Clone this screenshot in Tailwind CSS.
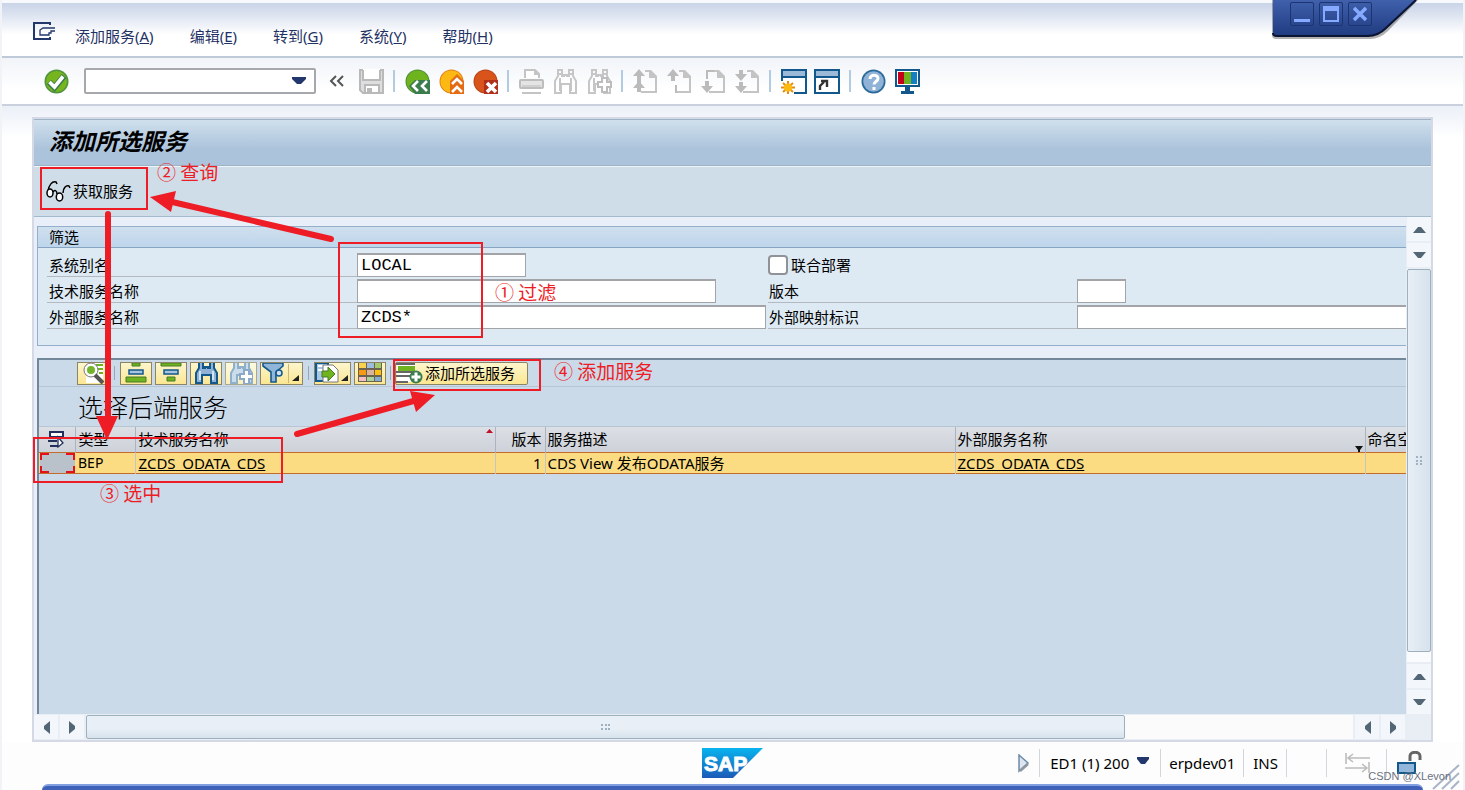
<!DOCTYPE html>
<html lang="zh-CN">
<head>
<meta charset="utf-8">
<title>添加所选服务</title>
<script src="https://cdn.jsdelivr.net/npm/@tailwindcss/browser@4"></script>
</head>
<body class="relative flex h-screen flex-col overflow-hidden border-x-2 border-[#f1f3f6] bg-white font-['Noto_Sans','Noto_Sans_CJK_SC',sans-serif] text-[15px] leading-5 text-black">

<svg class="hidden">
  <symbol id="binoc" viewBox="0 0 25 25"><path d="M5 1h4v6h2V6h3v1h2V1h4v6l3 5v12h-6v-9h-9v9H2V12l3-5z" fill="#fff" fill-opacity=".55" stroke="currentColor" stroke-width="2"/><path d="M5 5h4M16 5h4M7 9v13M18 9v13" stroke="currentColor" stroke-width="2" fill="none"/></symbol>
  <symbol id="page" viewBox="0 0 25 25"><path d="M12 1h6l6 6v17H8v-2h14V9h-6V3h-4z" fill="#c4c4c4"/></symbol>
</svg>

<header class="shrink-0">
  <nav class="flex h-[58px] items-center border-t-[3px] border-b-2 border-t-[#f7f9fc] border-b-[#bfcad8] bg-linear-to-b from-[#c9d4e8] to-white to-60% pt-3 pl-[31px] text-[#1f3264]">
    <button aria-label="菜单" class="mr-[19px] -mt-2"><svg width="23" height="19" viewBox="0 0 23 19" fill="none" stroke="#22376b" stroke-width="2"><path d="M17 3V1H1v16h16v-2"/><path d="M22 6H10L7 8v5h9v-2h2V9h4" stroke-width="1.3"/></svg></button>
    <div class="flex gap-9">
      <button>添加服务(<u>A</u>)</button>
      <button>编辑(<u>E</u>)</button>
      <button>转到(<u>G</u>)</button>
      <button>系统(<u>Y</u>)</button>
      <button>帮助(<u>H</u>)</button>
    </div>
  </nav>

  <div class="flex h-12 items-center gap-[9px] border-b-2 border-[#cbd0de] bg-linear-to-b from-[#f1f4f9] to-white to-70% pl-[42px]">
    <button aria-label="确认"><svg width="25" height="25" viewBox="0 0 25 25"><circle cx="12.500" cy="12.500" r="12" fill="#4f9440"/><circle cx="12.500" cy="12.500" r="10.500" fill="#77b51f"/><path d="M5 13l5.500 5.500L20 7" fill="none" stroke="#3b7c4c" stroke-width="6"/><path d="M5.500 13l5 5L19 7.500" fill="none" stroke="#fff" stroke-width="3.600"/></svg></button>
    <div class="ml-1.5 flex h-[26px] w-[232px] items-center rounded-xs border-2 border-[#a5a9ae] bg-white">
      <input aria-label="命令" class="min-w-0 flex-1 px-1 outline-none">
      <button aria-label="历史" class="px-2"><svg width="14" height="8" viewBox="0 0 14 8"><path d="M0 0h14v2L9 7H5L0 2z" fill="#22376b"/></svg></button>
    </div>
    <button aria-label="收起" class="mx-1"><svg width="15" height="12" viewBox="0 0 15 12" fill="none" stroke="#555" stroke-width="2"><path d="M7 1L2 6l5 5M14 1L9 6l5 5"/></svg></button>
    <button aria-label="保存" class="ml-0.5"><svg width="25" height="25" viewBox="0 0 25 25"><path d="M1 1h23v23H4l-3-3z" fill="#dedede" stroke="#b9b9b9" stroke-width="2"/><path d="M4 0h17v11H4z" fill="#fff"/><path d="M4 1v10h17V1" fill="none" stroke="#b9b9b9" stroke-width="2"/><path d="M6 16h14v8H6z" fill="#fff" stroke="#b9b9b9" stroke-width="2"/><path d="M8 19h5v5H8z" fill="#b9b9b9"/></svg></button>
    <span class="h-[22px] w-[3px] border-l-2 border-[#b3cbe0]"></span>
    <button aria-label="返回"><svg width="25" height="25" viewBox="0 0 25 25"><circle cx="12.500" cy="12.500" r="12" fill="#4c8f3a"/><circle cx="12.500" cy="12.500" r="11" fill="#6fb31e"/><path d="M4 17l6-6h15v14H10z" fill="#3b7c4c"/><path d="M13 12l-5 5 5 5M22 12l-5 5 5 5" fill="none" stroke="#fff" stroke-width="2.600"/></svg></button>
    <button aria-label="退出"><svg width="25" height="25" viewBox="0 0 25 25"><circle cx="12.500" cy="12.500" r="12" fill="#e2811a"/><circle cx="12.500" cy="12.500" r="11" fill="#fdb913"/><path d="M11 12l7-7 7 7v13H11z" fill="#e46d14"/><path d="M13 15l5-5 5 5M13 23l5-5 5 5" fill="none" stroke="#fff" stroke-width="2.600"/></svg></button>
    <button aria-label="取消"><svg width="25" height="25" viewBox="0 0 25 25"><circle cx="12.500" cy="12.500" r="12" fill="#b8421a"/><circle cx="12.500" cy="12.500" r="11" fill="#d9541a"/><path d="M11 11h14v14H11z" fill="#b0301c"/><path d="M14 14l9 9M23 14l-9 9" stroke="#fff" stroke-width="3.600"/></svg></button>
    <span class="h-[22px] w-[3px] border-l-2 border-[#b3cbe0]"></span>
    <button aria-label="打印"><svg width="25" height="25" viewBox="0 0 25 25"><path d="M6 9V1h10l4 4v4" fill="#fff" stroke="#c4c4c4" stroke-width="2"/><path d="M15 0v6h6z" fill="#c4c4c4"/><rect x="1" y="11" width="23" height="8" rx="1" fill="#e4e4e4" stroke="#bdbdbd" stroke-width="2"/><path d="M3 23h19v2H3z" fill="#c4c4c4"/><path d="M3 17h19" stroke="#bbb"/></svg></button>
    <button aria-label="查找" class="text-[#c6c6c6]"><svg width="25" height="25"><use href="#binoc"/></svg></button>
    <button aria-label="查找下一个" class="text-[#c6c6c6]"><svg width="25" height="25"><use href="#binoc"/><path d="M15 9h5v4h4v5h-4v5h-5v-5h-4v-5h4z" fill="#fff" stroke="#bdbdbd" stroke-width="2"/></svg></button>
    <span class="h-[22px] w-[3px] border-l-2 border-[#b3cbe0]"></span>
    <button aria-label="第一页"><svg width="25" height="25"><use href="#page"/><path d="M6 0l6 7H8v2H4V7H0zM6 12l6 7H8v4H4v-4H0z" fill="#bbb"/><path d="M4 8h4v7H4z" fill="#bbb"/></svg></button>
    <button aria-label="上一页"><svg width="25" height="25"><use href="#page"/><path d="M6 0l6 7H8v5H4V7H0zM8 16h2v8H8z" fill="#bbb"/></svg></button>
    <button aria-label="下一页"><svg width="25" height="25"><use href="#page"/><path d="M4 12h4v5h4l-6 7-6-7h4zM5 1h8v2H7v7H5z" fill="#bbb"/></svg></button>
    <button aria-label="最后一页"><svg width="25" height="25"><use href="#page"/><path d="M4 1h4v4h4l-6 7-6-7h4zM4 13h4v4h4l-6 7-6-7h4z" fill="#bbb"/></svg></button>
    <span class="h-[22px] w-[3px] border-l-2 border-[#b3cbe0]"></span>
    <button aria-label="新建会话"><svg width="26" height="25" viewBox="0 0 26 25"><path d="M1 1h24v23H1z" fill="#fff" stroke="#12588c" stroke-width="2"/><path d="M2 2h22v6H2z" fill="#9cbad8"/><path d="M1 8h24" stroke="#12588c" stroke-width="2"/><path d="M0 12h13v13H0z" fill="#fff"/><path d="M7 12v13M0 18.500h14M2 14l10 9M12 14L2 23" stroke="#e58a16" stroke-width="2"/><circle cx="7" cy="18.500" r="4" fill="#fdbb12"/></svg></button>
    <button aria-label="创建快捷方式" class="-ml-0.5"><svg width="26" height="25" viewBox="0 0 26 25"><path d="M1 1h24v23H1z" fill="#fff" stroke="#12588c" stroke-width="2"/><path d="M2 2h22v6H2z" fill="#9cbad8"/><path d="M1 8h24" stroke="#12588c" stroke-width="2"/><path d="M6 21v-4l4-4M7 12h6v6" fill="none" stroke="#333" stroke-width="2.400"/></svg></button>
    <span class="h-[22px] w-[3px] border-l-2 border-[#b3cbe0]"></span>
    <button aria-label="帮助"><svg width="25" height="25" viewBox="0 0 25 25"><circle cx="12.500" cy="12.500" r="12" fill="#2a6a9b"/><circle cx="12.500" cy="12.500" r="10.300" fill="#8fb2d6"/><path d="M9 10c0-5 8-5 8-.5 0 3-4 3-4 6M13 18v3" fill="none" stroke="#fff" stroke-width="3"/></svg></button>
    <button aria-label="自定义布局"><svg width="25" height="25" viewBox="0 0 25 25"><path d="M1 1h23v16H1z" fill="#fff" stroke="#12588c" stroke-width="2"/><path d="M3 3h6v12H3z" fill="#c4001a"/><path d="M9 3h7v12H9z" fill="#6fb31e"/><path d="M16 3h6v12h-6z" fill="#1480c4"/><path d="M10 18h5v4h4v3H6v-3h4z" fill="#12588c"/></svg></button>
  </div>
</header>

<main class="flex min-h-0 flex-1 flex-col bg-linear-to-b from-[#ebf0f8] to-white to-5% px-[30px] pt-[11px]">
  <section class="flex min-h-0 flex-1 flex-col border-2 border-[#d5d9e6] bg-[#e8eff8]">
    <h1 class="flex h-[47px] shrink-0 items-center border-y border-[#9db4c8] bg-linear-to-b from-[#d0e0ed] to-[#abc3db] to-65% pb-1 pl-[15px] text-[23px] leading-8 font-bold italic">添加所选服务</h1>
    <div class="flex h-[51px] shrink-0 items-center border-b border-[#a3b9cc] bg-[#cfdde8] pl-3 shadow-[inset_0_1px_0_#eef4f8]">
      <button class="flex items-center gap-0.5"><svg width="25" height="22" viewBox="0 0 25 22" fill="#fff" stroke="#000" stroke-width="1.500"><path d="M2 11C3 5 6 1 10 2l1 2M17 13c0-5 3-8 6-7l1 2" fill="none"/><ellipse cx="4" cy="13" rx="3" ry="4"/><ellipse cx="13.500" cy="17" rx="3.200" ry="4"/><path d="M7 12c2-3 4-1 4 2" fill="none"/></svg>获取服务</button>
    </div>

    <div class="flex min-h-0 flex-1">
      <div class="flex min-w-0 flex-1 flex-col gap-3 overflow-hidden pt-[9px] pl-[3px]">

        <fieldset class="shrink-0 border-y border-l border-[#93afcc] bg-[#ddeaf4] pb-4">
          <h2 class="flex h-[21px] items-center border-b border-[#87a4c2] bg-linear-to-b from-[#cfdfee] to-[#bed5eb] pl-[11px]">筛选</h2>
          <div class="grid grid-cols-[310px_409px_311px_1fr] gap-y-0.5 pt-[5px] pl-[9px]">
            <label for="alias" class="flex h-6 items-center border-b border-[#b3b9bf] pl-0.5">系统别名</label>
            <input id="alias" value="LOCAL" class="h-6 w-[169px] border border-t-2 border-[#a2a4a7] bg-white px-[3px] font-['Liberation_Mono',monospace] text-[17px] outline-none">
            <div class="col-span-2 flex items-center gap-[3px] pl-0.5">
              <input id="cohost" type="checkbox" class="size-5 appearance-none rounded-sm border-2 border-[#8f9296] bg-white"><label for="cohost">联合部署</label>
            </div>

            <label for="tech" class="flex h-6 items-center border-b border-[#b3b9bf] pl-0.5">技术服务名称</label>
            <input id="tech" class="h-6 w-[359px] border border-t-2 border-[#a2a4a7] bg-white px-[3px] outline-none">
            <label for="ver" class="ml-0.5 flex h-6 items-center border-b border-[#b3b9bf] pl-px">版本</label>
            <input id="ver" class="h-6 w-[49px] border border-t-2 border-[#a2a4a7] bg-white outline-none">

            <label for="ext" class="flex h-6 items-center border-b border-[#b3b9bf] pl-0.5">外部服务名称</label>
            <input id="ext" value="ZCDS*" class="h-6 w-full border border-t-2 border-[#a2a4a7] bg-white px-[3px] font-['Liberation_Mono',monospace] text-[17px] outline-none">
            <label for="map" class="ml-0.5 flex h-6 items-center border-b border-[#b3b9bf] pl-px">外部映射标识</label>
            <input id="map" class="h-6 w-full border border-t-2 border-r-0 border-[#a2a4a7] bg-white outline-none">
          </div>
        </fieldset>

        <div class="min-h-0 flex-1 border-t-2 border-l-2 border-[#728799] bg-[#cbdae9]">
          <div class="flex h-[27px] items-center gap-[3px] border-b border-[#b6c6d6] pl-[38px]">
            <button aria-label="明细" class="h-[23px] w-8 border border-[#8b8565] bg-linear-to-b from-[#fdf6cd] to-[#fbe690] pl-1"><svg width="24" height="21" viewBox="0 0 24 21"><path d="M5 0h16v20H4v-7" fill="#fff"/><path d="M14 2h7M16 6h5M17 10h4" stroke="#6fb31e" stroke-width="2"/><circle cx="9" cy="7" r="5.500" fill="#72b52a" stroke="#fff" stroke-width="3"/><circle cx="9" cy="7" r="7" fill="none" stroke="#777"/><path d="M13 12l8 8" stroke="#555" stroke-width="4"/></svg></button>
            <span class="mx-0.5 h-3.5 w-px bg-[#9aa6b1]"></span>
            <button aria-label="升序" class="h-[23px] w-8 border border-[#8b8565] bg-linear-to-b from-[#fdf6cd] to-[#fbe690]"><svg width="30" height="21" viewBox="0 0 30 21"><path d="M11 0h8v3h-8zM5 14h20v5H5z" fill="#6fb31e" stroke="#467a2a"/><path d="M8 7h14v4H8z" fill="#a9c4e0" stroke="#12588c" stroke-width="1.500"/></svg></button>
            <button aria-label="降序" class="h-[23px] w-8 border border-[#8b8565] bg-linear-to-b from-[#fdf6cd] to-[#fbe690]"><svg width="30" height="21" viewBox="0 0 30 21"><path d="M5 0h20v3H5zM11 14h8v4h-8z" fill="#6fb31e" stroke="#467a2a"/><path d="M8 7h14v4H8z" fill="#a9c4e0" stroke="#12588c" stroke-width="1.500"/></svg></button>
            <button aria-label="查找" class="h-[23px] w-8 border border-[#8b8565] bg-linear-to-b from-[#fdf6cd] to-[#fbe690] pl-[3px] text-[#12588c]"><svg width="24" height="21" viewBox="0 2 24 21"><path d="M5 1h4v6h2V6h3v1h2V1h4v6l3 5v10h-6v-8h-9v8H2V12l3-5z" fill="#8fb2d6" stroke="currentColor" stroke-width="2"/><path d="M6 10v9M19 10v9" stroke="#d4e3f2" stroke-width="2"/></svg></button>
            <button aria-label="查找下一个" class="h-[23px] w-8 border border-[#a9a78f] bg-linear-to-b from-[#fdf9df] to-[#fbefb8] pl-[3px] text-[#8fb0cb]"><svg width="24" height="21" viewBox="0 2 24 21"><path d="M5 1h4v6h2V6h3v1h2V1h4v6l3 5v10h-6v-8h-9v8H2V12l3-5z" fill="#cbdcea" stroke="currentColor" stroke-width="2"/><path d="M15 9h5v4h4v5h-4v5h-5v-5h-4v-5h4z" fill="#fff" stroke="#8aa9c8" stroke-width="2"/></svg></button>
            <button aria-label="过滤" class="h-[23px] w-[43px] border border-[#8b8565] bg-linear-to-b from-[#fdf6cd] to-[#fbe690]"><svg width="41" height="21" viewBox="0 0 41 21"><path d="M2 0h20v3l-7 6v10h-5V9L2 3z" fill="#8fb5d8" stroke="#12588c" stroke-width="1.600"/><circle cx="18" cy="10" r="3" fill="#cfe0ef" stroke="#12588c" stroke-width="1.500"/><path d="M27.500 1v19" stroke="#c9b974"/><path d="M38 12v6h-7z" fill="#222"/></svg></button>
            <span class="mx-0.5 h-3.5 w-px bg-[#9aa6b1]"></span>
            <button aria-label="导出" class="h-[23px] w-[37px] border border-[#8b8565] bg-linear-to-b from-[#fdf6cd] to-[#fbe690]"><svg width="35" height="21" viewBox="0 0 35 21"><path d="M1 0h12v18H1z" fill="#a9c8e6" stroke="#12588c" stroke-width="2"/><path d="M3 2h7v2H3zM3 6h7v2H3z" fill="#fff"/><path d="M8 2h10l5 5v12H8z" fill="#fff" stroke="#777"/><path d="M7 8h6V4l7 7-7 7v-4H7z" fill="#6fb31e" stroke="#467a2a"/><path d="M33 12v6h-7z" fill="#222"/></svg></button>
            <button aria-label="布局" class="h-[23px] w-8 border border-[#8b8565] bg-linear-to-b from-[#fdf6cd] to-[#fbe690]"><svg width="30" height="21" viewBox="0 0 30 21"><path d="M3 0h24v19H3z" fill="#6b6250"/><path d="M4 0h7v5H4z" fill="#fbd24f"/><path d="M12 0h7v5h-7z" fill="#9cbde0"/><path d="M20 0h6v5h-6z" fill="#a5cc6a"/><path d="M4 7h7v5H4z" fill="#f59b12"/><path d="M12 7h7v5h-7z" fill="#d9b49a"/><path d="M20 7h6v5h-6z" fill="#fdc010"/><path d="M4 14h7v4H4z" fill="#f2c0c4"/><path d="M12 14h7v4h-7z" fill="#a9d39a"/><path d="M20 14h6v4h-6z" fill="#86acd4"/></svg></button>
            <span class="mx-px h-3.5 w-px bg-[#9aa6b1]"></span>
            <button class="flex h-[23px] items-center rounded-xs border border-[#8b8565] bg-linear-to-b from-[#fdf6cd] to-[#fbe690] pr-3 whitespace-nowrap"><svg width="29" height="21" viewBox="0 0 29 21"><path d="M1 0h18v19H1z" fill="#fff"/><path d="M0 1h19M0 9h19M0 13h14M0 19h12" stroke="#666" stroke-width="2"/><path d="M2 3h17v5H2z" fill="#6fb31e"/><circle cx="20" cy="14" r="6.500" fill="#3b7c4c"/><path d="M20 9.500v9M15.500 14h9" stroke="#fff" stroke-width="3"/></svg>添加所选服务</button>
          </div>
          <h2 class="flex h-10 items-center border-b border-[#b6c6d6] pl-[39px] text-[25px] leading-8 font-light">选择后端服务</h2>
          <table class="w-full table-fixed border-collapse text-left">
            <colgroup><col class="w-9"><col class="w-[60px]"><col class="w-[360px]"><col class="w-[50px]"><col class="w-[410px]"><col class="w-[410px]"><col></colgroup>
            <thead>
              <tr class="h-[25px] bg-linear-to-b from-[#dcdfe4] to-[#cdd1d9] whitespace-nowrap">
                <th class="border-r border-[#aab4c0] pl-2"><button aria-label="全选" class="block"><svg width="19" height="17" viewBox="0 0 19 17" fill="#fff" stroke="#22305c" stroke-width="2"><path d="M3 1h13v5H3zM1 10h9M3 15h9"/><path d="M11 6v10l5-4z" stroke-width="1.300"/></svg></button></th>
                <th class="border-r border-[#aab4c0] pl-[3px] font-normal">类型</th>
                <th class="relative border-r border-[#aab4c0] pl-[3px] font-normal">技术服务名称<svg class="absolute top-0.5 right-0.5" width="7" height="4"><path d="M0 4l3.500-4L7 4z" fill="#c0102a"/></svg></th>
                <th class="border-r border-[#aab4c0] pr-[3px] text-right font-normal">版本</th>
                <th class="border-r border-[#aab4c0] pl-0.5 font-normal">服务描述</th>
                <th class="relative border-r border-[#aab4c0] pl-0.5 font-normal">外部服务名称<svg class="absolute right-0.5 bottom-0" width="8" height="6"><path d="M0 0h8L5 4v2H3V4z" fill="#111"/></svg></th>
                <th class="overflow-hidden pl-0.5 font-normal text-clip">命名空间</th>
              </tr>
            </thead>
            <tbody>
              <tr class="h-[21px] border-y border-[#c56c2c] bg-[#fcdc82] whitespace-nowrap">
                <td class="p-0"><button aria-label="选择行" class="relative ml-px block h-5 w-[35px] bg-[#b9c1ca]"><svg class="absolute inset-0" width="35" height="20" fill="none" stroke="#e1121c" stroke-width="2"><path d="M9 1H1v6M26 1h8v6M9 19H1v-6M26 19h8v-6"/></svg></button></td>
                <td class="border-r border-[#c4c6c0] p-0 pl-[3px] text-[14px]">BEP</td>
                <td class="border-r border-[#c4c6c0] p-0 pl-[3px]"><a href="#" class="underline">ZCDS_ODATA_CDS</a></td>
                <td class="border-r border-[#c4c6c0] p-0 pr-[3px] text-right">1</td>
                <td class="border-r border-[#c4c6c0] p-0 pl-0.5">CDS View 发布ODATA服务</td>
                <td class="border-r border-[#c4c6c0] p-0 pl-0.5"><a href="#" class="underline">ZCDS_ODATA_CDS</a></td>
                <td></td>
              </tr>
            </tbody>
          </table>
        </div>
      </div>

      <div class="flex w-[25px] flex-col gap-0.5 bg-[#e9eef5] pl-px">
        <button aria-label="向上" class="grid h-6 place-items-center bg-[#f3f7fc]"><svg width="13" height="7"><path d="M0 7l5-6h3l5 6z" fill="#526675"/></svg></button>
        <button aria-label="向下" class="grid h-6 place-items-center bg-[#f3f7fc]"><svg width="13" height="7"><path d="M0 0h13L8 6H5z" fill="#526675"/></svg></button>
        <div class="flex flex-1 flex-col bg-[#fafbfc] pb-2.5">
          <div class="grid flex-1 place-items-center rounded-xs border border-[#9eafbd] bg-linear-to-r from-[#e8eff6] to-[#d6e2ec]"><svg width="8" height="9" fill="#9fb0c0"><path d="M1 0h2v2H1zM5 0h2v2H5zM1 4h2v2H1zM5 4h2v2H5zM1 7h2v2H1zM5 7h2v2H5z"/></svg></div>
        </div>
        <button aria-label="向上" class="grid h-6 place-items-center bg-[#f3f7fc]"><svg width="13" height="7"><path d="M0 7l5-6h3l5 6z" fill="#526675"/></svg></button>
        <button aria-label="向下" class="grid h-6 place-items-center bg-[#f3f7fc]"><svg width="13" height="7"><path d="M0 0h13L8 6H5z" fill="#526675"/></svg></button>
      </div>
    </div>

    <div class="flex h-[26px] shrink-0 gap-0.5 bg-[#e9eef5] py-px">
      <button aria-label="向左" class="grid w-6 place-items-center bg-[#f3f7fc]"><svg width="7" height="13"><path d="M7 0v13L1 8V5z" fill="#526675"/></svg></button>
      <button aria-label="向右" class="grid w-6 place-items-center bg-[#f3f7fc]"><svg width="7" height="13"><path d="M0 0v13l6-5V5z" fill="#526675"/></svg></button>
      <div class="flex flex-1 bg-[#fbfbfb]">
        <div class="grid w-[82%] place-items-center rounded-xs border border-[#9eafbd] bg-linear-to-b from-[#e8eff6] from-60% to-[#d6e2ec]"><svg width="9" height="8" fill="#9fb0c0"><path d="M0 1h2v2H0zM4 1h2v2H4zM7 1h2v2H7zM0 5h2v2H0zM4 5h2v2H4zM7 5h2v2H7z"/></svg></div>
      </div>
      <button aria-label="向左" class="grid w-6 place-items-center bg-[#f3f7fc]"><svg width="7" height="13"><path d="M7 0v13L1 8V5z" fill="#526675"/></svg></button>
      <button aria-label="向右" class="grid w-6 place-items-center bg-[#f3f7fc]"><svg width="7" height="13"><path d="M0 0v13l6-5V5z" fill="#526675"/></svg></button>
      <span class="w-6"></span>
    </div>
  </section>
</main>

<footer class="shrink-0 bg-[#fdfdfd]">
  <div class="grid h-[42px] grid-cols-[1fr_auto_1fr] items-center">
    <span></span>
    <svg width="61" height="30" viewBox="0 0 61 30"><defs><linearGradient id="sap" x2="0" y2="1"><stop stop-color="#08b4ee"/><stop offset="1" stop-color="#1c5bb8"/></linearGradient></defs><path d="M0 0h61L31 30H0z" fill="url(#sap)"/><text x="2" y="23" font-family="Liberation Sans" font-weight="bold" font-size="21" fill="#fff" stroke="#fff">SAP</text></svg>
    <div class="flex items-center justify-end pr-[41px] whitespace-nowrap">
      <button aria-label="展开"><svg width="13" height="19" viewBox="0 0 13 19"><path d="M2 1l9 8-9 8z" fill="#dbe6f0" stroke="#6d8ba6" stroke-width="1.500"/><path d="M3 17l8-7" stroke="#8f979f" stroke-width="2.500"/></svg></button>
      <span class="mr-2.5 ml-[9px] h-7 w-px bg-[#d3d6da]"></span>
      <button class="flex items-center gap-2">ED1 (1) 200<svg width="12" height="8" class="-mt-1"><path d="M0 0h12v2L8 7H4L0 2z" fill="#22376b"/></svg></button>
      <span class="mr-2 ml-[11px] h-7 w-px bg-[#d3d6da]"></span>
      <span>erpdev01</span>
      <span class="mr-[9px] ml-2 h-7 w-px bg-[#d3d6da]"></span>
      <span>INS</span>
      <span class="ml-2 h-7 w-px bg-[#d3d6da]"></span>
      <span class="mr-[18px] ml-[39px] h-7 w-px bg-[#d3d6da]"></span>
      <svg width="25" height="20" viewBox="0 0 25 20" fill="none" stroke="#bcbcbc" stroke-width="1.600"><path d="M1 0v11M24 9v11M3 5h22M0 15h22M8 1L3 5l5 4M17 11l5 4-5 4"/></svg>
      <span class="mr-2.5 ml-4 h-7 w-px bg-[#d3d6da]"></span>
      <svg width="25" height="24" viewBox="0 0 25 24"><path d="M13 10V5c0-5 10-5 10 0v4" fill="none" stroke="#666" stroke-width="3"/><path d="M1 12h17v10H1z" fill="#93b7da" stroke="#12588c" stroke-width="2"/></svg>
    </div>
  </div>
  <div class="mx-10 h-1.5 rounded-t-lg border-t-2 border-[#829fdf] bg-[#3f62b8]"></div>
</footer>

<svg class="absolute right-0 bottom-0" width="32" height="28" stroke="#a9b4c6" stroke-width="2"><path d="M2 27L28 3M11 27L28 11M20 27l8-8"/></svg>
<span class="absolute right-3 bottom-1 font-['Liberation_Sans',sans-serif] text-[11px] leading-5 text-gray-500">CSDN @XLevon</span>

<div class="absolute top-0 right-10">
  <svg width="152" height="42" viewBox="0 0 152 42"><defs><linearGradient id="cap" x2="0" y2="1"><stop stop-color="#4060ac"/><stop offset="1" stop-color="#1f3b80"/></linearGradient></defs><path d="M1 0h146l-30 31q-8 8-18 8H5q-4 0-4-4z" fill="#000" fill-opacity=".3"/><path d="M2 0h143l-30 28q-8 8-18 8H6q-4 0-4-4z" fill="url(#cap)"/><path d="M145 0l-30 28q-8 8-18 8H6q-4 0-4-3" fill="none" stroke="#0b1430" stroke-width="2"/></svg>
  <div class="absolute top-0.5 left-[19px] flex gap-[5px]">
    <button aria-label="最小化" class="size-6 rounded-xs border border-[#1c3472]"><svg width="22" height="22"><path d="M3 16h16v3H3z" fill="#86aaff"/></svg></button>
    <button aria-label="最大化" class="size-6 rounded-xs border border-[#1c3472]"><svg width="22" height="22"><path d="M3 3h16v16H3zM5 8v9h12V8z" fill="#86aaff" fill-rule="evenodd"/></svg></button>
    <button aria-label="关闭" class="size-6 rounded-xs border border-[#1c3472]"><svg width="22" height="22"><path d="M5 5l12 12M17 5L5 17" stroke="#86aaff" stroke-width="3.500"/></svg></button>
  </div>
</div>

<!-- Tutorial callouts drawn over the window -->
<svg class="pointer-events-none absolute top-0 -left-0.5" width="1465" height="790" fill="none" stroke="#ee1c25" stroke-width="2">
  <path d="M41 168h106v41H41zM339 243h143v94H339zM394 360h146v30H394zM34 438h248v44H34z"/>
  <path d="M331 239L168 201M108 214v208M297 434l120-34" stroke-width="6" stroke-linecap="round"/>
  <path d="M150 197l26-6-5 21zM107 440l-11-24h22zM435 395l-25-4 6 21z" fill="#ee1c25" stroke="none"/>
  <g fill="#ee1c25" stroke="none" font-size="19" font-family="'Noto Sans CJK SC',sans-serif">
    <text x="157" y="180">② 查询</text><text x="495" y="300">① 过滤</text><text x="100" y="501">③ 选中</text><text x="554" y="379">④ 添加服务</text>
  </g>
</svg>
</body>
</html>
